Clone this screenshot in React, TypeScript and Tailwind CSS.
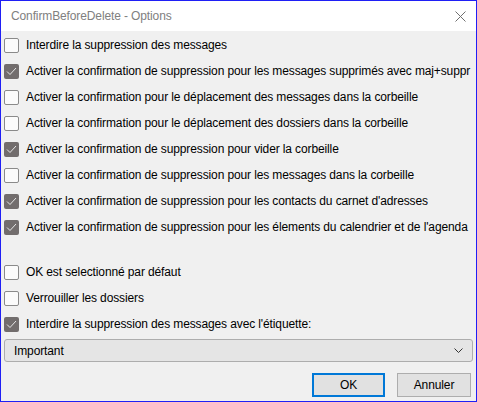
import React from "react";

const topOptions = [
  { label: "Interdire la suppression des messages", checked: false },
  { label: "Activer la confirmation de suppression pour les messages supprimés avec maj+suppr", checked: true },
  { label: "Activer la confirmation pour le déplacement des messages dans la corbeille", checked: false },
  { label: "Activer la confirmation pour le déplacement des dossiers dans la corbeille", checked: false },
  { label: "Activer la confirmation de suppression pour vider la corbeille", checked: true },
  { label: "Activer la confirmation de suppression pour les messages dans la corbeille", checked: false },
  { label: "Activer la confirmation de suppression pour les contacts du carnet d'adresses", checked: true },
  { label: "Activer la confirmation de suppression pour les élements du calendrier et de l'agenda", checked: true },
];

const bottomOptions = [
  { label: "OK est selectionné par défaut", checked: false },
  { label: "Verrouiller les dossiers", checked: false },
  { label: "Interdire la suppression des messages avec l'étiquette:", checked: true },
];

function CheckRow({ label, checked }: { label: string; checked: boolean }) {
  return (
    <div className="flex h-[26px] items-center gap-[7px] whitespace-nowrap pl-[3px]">
      {checked ? (
        <div className="flex h-[15px] w-[15px] shrink-0 items-center justify-center rounded-[2px] bg-[#726d6d]">
          <svg width="15" height="15" viewBox="0 0 15 15">
            <polyline points="3,7.5 6,10.5 12,4" fill="none" stroke="#e6e6e6" strokeWidth="1" />
          </svg>
        </div>
      ) : (
        <div className="h-[15px] w-[15px] shrink-0 rounded-[2px] border border-[#8a8a8a] bg-[#fbfbfb]" />
      )}
      <span>{label}</span>
    </div>
  );
}

export default function App() {
  return (
    <div
      className="h-[402px] w-[477px] overflow-hidden border border-[#1f1ff5] bg-[#f0f0f0] text-[12px] tracking-[-0.12px] text-black"
      style={{ fontFamily: '"Liberation Sans", Arial, sans-serif' }}
    >
      {/* title bar */}
      <div className="flex h-[30px] items-center justify-between bg-white pl-[10px] pr-[10px]">
        <span className="text-[#808080]">ConfirmBeforeDelete - Options</span>
        <svg width="11" height="11" viewBox="0 0 11 11">
          <path d="M0.5 0.5 L10.5 10.5 M10.5 0.5 L0.5 10.5" stroke="#6f6f6f" strokeWidth="1" />
        </svg>
      </div>

      <div className="flex flex-col pt-[1px]">
        {topOptions.map((o) => (
          <CheckRow key={o.label} label={o.label} checked={o.checked} />
        ))}

        <div className="h-[19px]" />

        {bottomOptions.map((o) => (
          <CheckRow key={o.label} label={o.label} checked={o.checked} />
        ))}

        {/* label dropdown */}
        <div className="mx-[3px] mt-[2px] flex h-[23px] items-center justify-between rounded-[3px] border border-[#adadad] bg-[#e5e5e5] pl-[9px] pr-[9px]">
          <span>Important</span>
          <svg width="9" height="6" viewBox="0 0 9 6">
            <polyline points="0.5,0.5 4.5,4.5 8.5,0.5" fill="none" stroke="#333" strokeWidth="1" />
          </svg>
        </div>

        {/* buttons */}
        <div className="mt-[11px] flex justify-end gap-[12px] pr-[5px]">
          <button className="h-[24px] w-[73px] border-2 border-[#0078d7] bg-[#e1e1e1]">OK</button>
          <button className="h-[24px] w-[74px] border border-[#adadad] bg-[#e1e1e1]">Annuler</button>
        </div>
      </div>
    </div>
  );
}
